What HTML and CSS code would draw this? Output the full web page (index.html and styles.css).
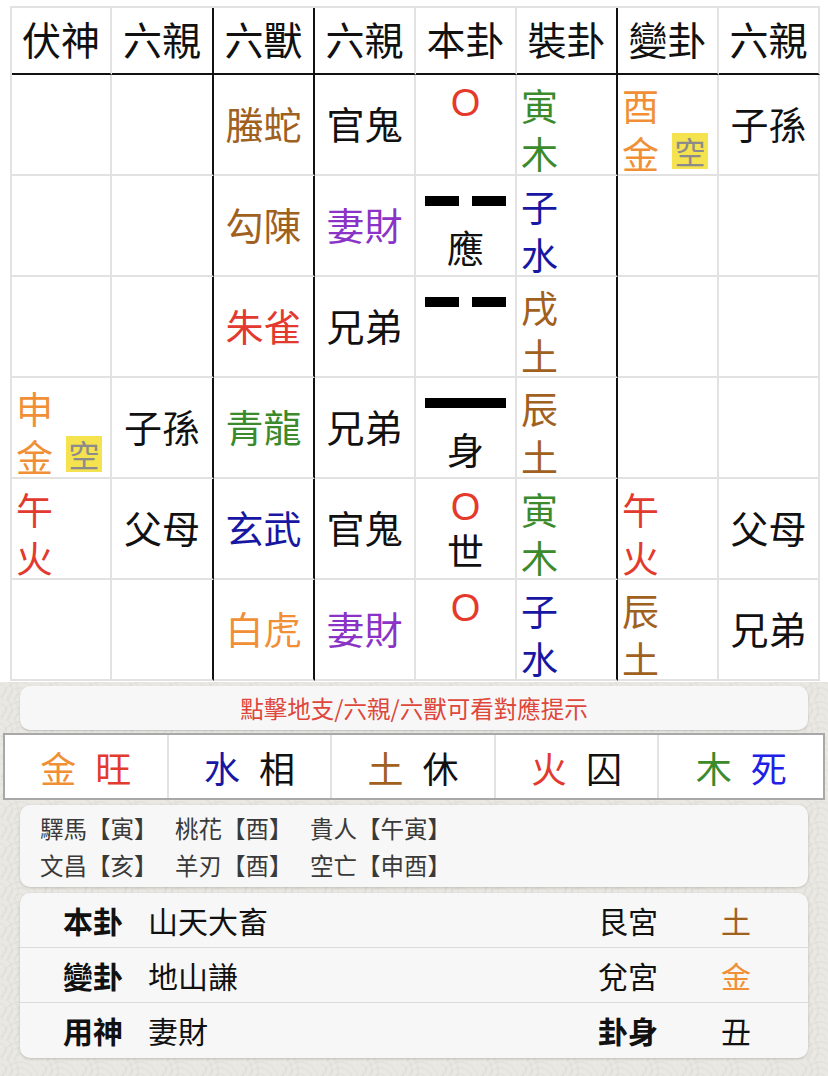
FILE: index.html
```html
<!DOCTYPE html>
<html lang="zh-Hant">
<head>
<meta charset="utf-8">
<title>六爻排盤</title>
<link rel="stylesheet" href="styles.css">
</head>
<body>
<div class="sheet">
  <div class="gua">
    <div class="h">伏神</div><div class="h">六親</div><div class="h">六獸</div><div class="h">六親</div><div class="h">本卦</div><div class="h">裝卦</div><div class="h">變卦</div><div class="h">六親</div>

    <div class="c"></div>
    <div class="c"></div>
    <div class="c brown">螣蛇</div>
    <div class="c">官鬼</div>
    <div class="yao"><div class="yt"><span class="o">O</span></div><div class="yl"></div></div>
    <div class="st green">寅<br>木</div>
    <div class="st orange">酉<br>金<span class="kong">空</span></div>
    <div class="c">子孫</div>

    <div class="c"></div>
    <div class="c"></div>
    <div class="c brown">勾陳</div>
    <div class="c purple">妻財</div>
    <div class="yao"><div class="yt"><span class="yin"><i></i><i></i></span></div><div class="yl">應</div></div>
    <div class="st blue">子<br>水</div>
    <div class="c"></div>
    <div class="c"></div>

    <div class="c"></div>
    <div class="c"></div>
    <div class="c red">朱雀</div>
    <div class="c">兄弟</div>
    <div class="yao"><div class="yt"><span class="yin"><i></i><i></i></span></div><div class="yl"></div></div>
    <div class="st brown">戌<br>土</div>
    <div class="c"></div>
    <div class="c"></div>

    <div class="st orange">申<br>金<span class="kong">空</span></div>
    <div class="c">子孫</div>
    <div class="c green">青龍</div>
    <div class="c">兄弟</div>
    <div class="yao"><div class="yt"><span class="yang"></span></div><div class="yl">身</div></div>
    <div class="st brown">辰<br>土</div>
    <div class="c"></div>
    <div class="c"></div>

    <div class="st red">午<br>火</div>
    <div class="c">父母</div>
    <div class="c blue">玄武</div>
    <div class="c">官鬼</div>
    <div class="yao"><div class="yt"><span class="o">O</span></div><div class="yl">世</div></div>
    <div class="st green">寅<br>木</div>
    <div class="st red">午<br>火</div>
    <div class="c">父母</div>

    <div class="c"></div>
    <div class="c"></div>
    <div class="c orange">白虎</div>
    <div class="c purple">妻財</div>
    <div class="yao"><div class="yt"><span class="o">O</span></div><div class="yl"></div></div>
    <div class="st blue">子<br>水</div>
    <div class="st brown">辰<br>土</div>
    <div class="c">兄弟</div>
  </div>
</div>

<div class="hint">點擊地支/六親/六獸可看對應提示</div>

<div class="wx">
  <div class="wx-cell"><span class="orange">金</span><span class="red">旺</span></div>
  <div class="wx-cell"><span class="blue">水</span><span>相</span></div>
  <div class="wx-cell"><span class="brown">土</span><span>休</span></div>
  <div class="wx-cell"><span class="red">火</span><span>囚</span></div>
  <div class="wx-cell"><span class="green">木</span><span class="bright-blue">死</span></div>
</div>

<div class="card shensha">
  <div class="ss-line"><span class="ss">驛馬【寅】</span><span class="ss">桃花【酉】</span><span class="ss">貴人【午寅】</span></div>
  <div class="ss-line"><span class="ss">文昌【亥】</span><span class="ss">羊刃【酉】</span><span class="ss">空亡【申酉】</span></div>
</div>

<div class="card info">
  <div class="info-row"><span class="lb">本卦</span><span>山天大畜</span><span>艮宮</span><span class="brown">土</span></div>
  <div class="info-row"><span class="lb">變卦</span><span>地山謙</span><span>兌宮</span><span class="orange">金</span></div>
  <div class="info-row"><span class="lb">用神</span><span>妻財</span><span class="lb">卦身</span><span>丑</span></div>
</div>
</body>
</html>
```

FILE: styles.css
```css
* { box-sizing: border-box; }

html, body {
  margin: 0;
  padding: 0;
}

body {
  width: 828px;
  min-height: 1076px;
  background-color: #e9e8e2;
  background-image:
    radial-gradient(circle at 50% 100%, transparent 0 5px, rgba(0, 0, 0, 0.025) 5px 7px, transparent 7px 11px, rgba(0, 0, 0, 0.025) 11px 13px, transparent 13px 17px, rgba(0, 0, 0, 0.025) 17px 19px, transparent 19px),
    radial-gradient(circle at 0 50%, transparent 0 5px, rgba(0, 0, 0, 0.02) 5px 7px, transparent 7px 11px, rgba(0, 0, 0, 0.02) 11px 13px, transparent 13px 17px, rgba(0, 0, 0, 0.02) 17px 19px, transparent 19px);
  background-size: 40px 20px, 40px 20px;
  font-family: "Noto Sans CJK TC", "Noto Sans CJK SC", sans-serif;
  color: #111;
  overflow: hidden;
}

.sheet {
  background: #fff;
  padding: 6px 0 1px 10px;
}

.gua {
  display: grid;
  grid-template-columns: 100px 102px repeat(6, 101px);
  grid-template-rows: 67px repeat(6, 101px);
  border-top: 2px solid #e2e2e2;
  border-left: 2px solid #e2e2e2;
  width: max-content;
}

.gua > div {
  border-right: 2px solid #e2e2e2;
  border-bottom: 2px solid #e2e2e2;
}

.gua > div:nth-child(8n+2),
.gua > div:nth-child(8n+3),
.gua > div:nth-child(8n+6) {
  border-right-color: #111;
}

.h {
  display: flex;
  align-items: center;
  justify-content: center;
  font-size: 39px;
  line-height: 1;
  padding-bottom: 4px;
  border-bottom-color: #111 !important;
}

.c {
  display: flex;
  align-items: center;
  justify-content: center;
  font-size: 38px;
  line-height: 1;
  padding-bottom: 4px;
}

.st {
  padding: 6px 0 0 4px;
  font-size: 37px;
  line-height: 48px;
  white-space: nowrap;
}

.kong {
  display: inline-block;
  width: 36px;
  height: 36px;
  line-height: 36px;
  margin-left: 13px;
  vertical-align: 5px;
  background: #f4e24e;
  color: #8b8b8b;
  font-size: 31px;
  text-align: center;
}

.yao {
  display: flex;
  flex-direction: column;
  align-items: center;
  padding-top: 4px;
}

.yt {
  height: 48px;
  display: flex;
  align-items: center;
  justify-content: center;
}

.yl {
  height: 38px;
  line-height: 38px;
  font-size: 37px;
}

.o {
  font-family: "Liberation Sans", sans-serif;
  font-size: 38px;
  line-height: 48px;
  color: #e5392c;
}

.yang {
  display: block;
  width: 81px;
  height: 10px;
  background: #000;
  margin-bottom: 6px;
}

.yin {
  display: flex;
  gap: 13px;
  margin-bottom: 6px;
}

.yin i {
  display: block;
  width: 34px;
  height: 10px;
  background: #000;
}

.brown { color: #a0611f; }
.green { color: #3b8a2c; }
.blue { color: #1717a3; }
.red { color: #e23a2f; }
.orange { color: #f08f35; }
.purple { color: #8b33c6; }
.bright-blue { color: #2020e6; }

.hint {
  margin: 4px 20px 0 20px;
  height: 44px;
  border-radius: 10px;
  background: #f7f7f7;
  box-shadow: 0 1px 2px rgba(0, 0, 0, 0.18);
  color: #df463c;
  font-size: 23.5px;
  line-height: 44px;
  text-align: center;
}

.wx {
  margin: 3px 3px 0 3px;
  height: 67px;
  display: grid;
  grid-template-columns: repeat(5, 1fr);
  border: 2px solid #a8a8a8;
  background: #fff;
}

.wx-cell {
  display: flex;
  align-items: center;
  justify-content: center;
  gap: 19px;
  font-size: 36px;
  border-right: 2px solid #e2e2e2;
}

.wx-cell:last-child {
  border-right: none;
}

.card {
  margin: 0 20px;
  background: #f7f7f7;
  border-radius: 10px;
  box-shadow: 0 1px 3px rgba(0, 0, 0, 0.18);
}

.shensha {
  margin-top: 5px;
  height: 82px;
  padding: 5px 0 0 20px;
  color: #3a3a3a;
  font-size: 23.5px;
}

.ss-line {
  height: 37px;
  line-height: 37px;
  display: flex;
}

.ss {
  width: 135px;
  white-space: nowrap;
}

.info {
  margin-top: 6px;
}

.info-row {
  display: grid;
  grid-template-columns: 85px 1fr 123px 60px;
  padding: 0 27px 0 43px;
  height: 55px;
  line-height: 55px;
  font-size: 30px;
  border-bottom: 1px solid #dcdcdc;
}

.info-row:last-child {
  border-bottom: none;
}

.lb {
  font-weight: 700;
}
```
